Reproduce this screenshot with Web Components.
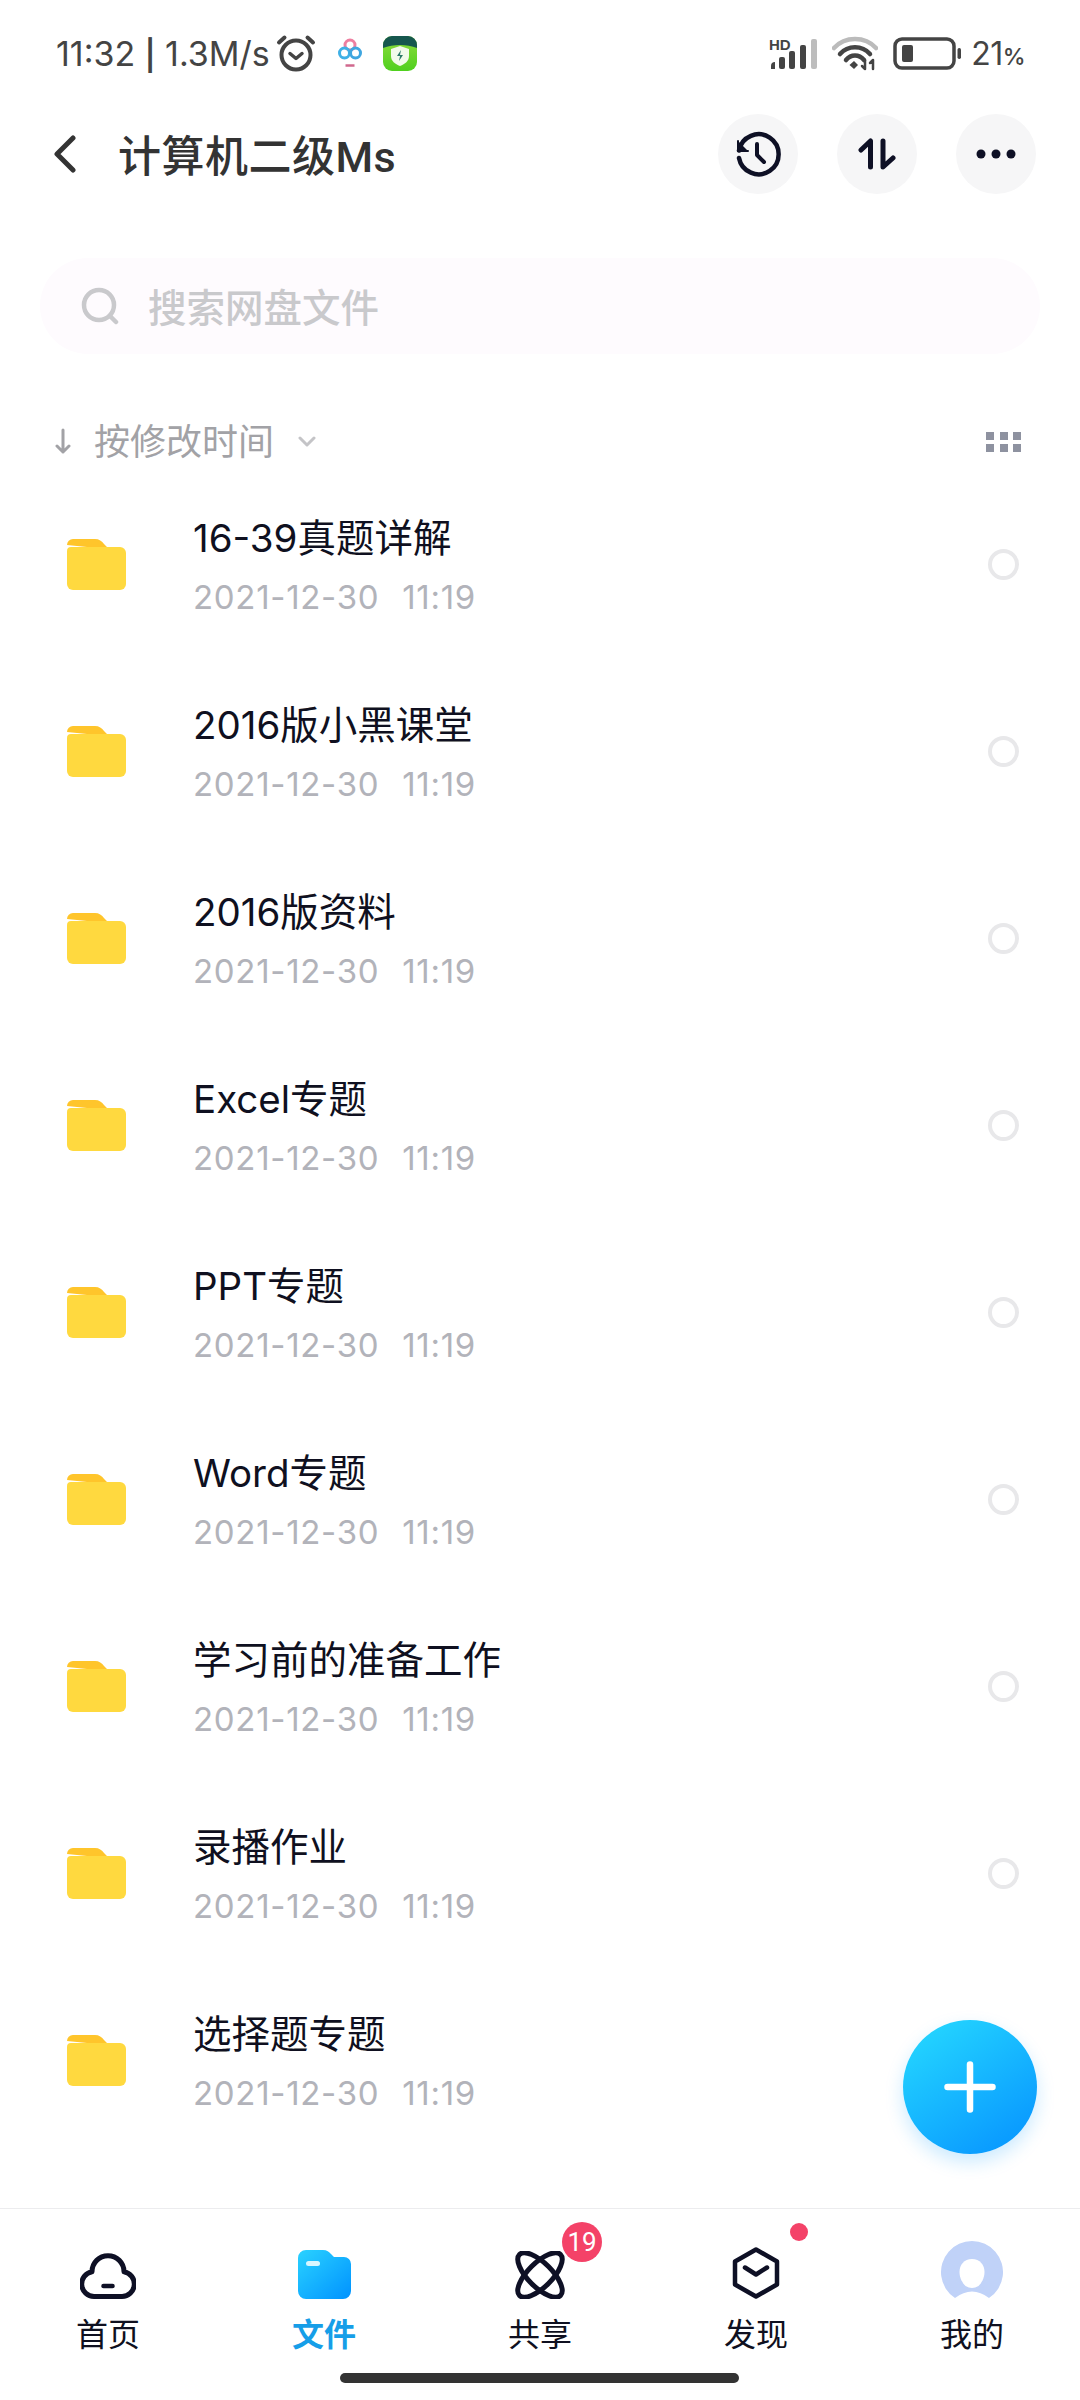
<!DOCTYPE html>
<html lang="zh">
<head>
<meta charset="utf-8">
<title>计算机二级Ms</title>
<style>
    html, body { margin: 0; padding: 0; background: #fff; }
    body { font-family: Roboto, "Noto Sans CJK SC", sans-serif; }
</style>
</head>
<body>
<disk-page>
    <status-bar></status-bar>
    <app-header title="计算机二级Ms"></app-header>
    <search-box placeholder="搜索网盘文件"></search-box>
    <sort-bar label="按修改时间"></sort-bar>
    <file-list>
        <file-row name="16-39真题详解" time="2021-12-30  11:19"></file-row>
        <file-row name="2016版小黑课堂" time="2021-12-30  11:19"></file-row>
        <file-row name="2016版资料" time="2021-12-30  11:19"></file-row>
        <file-row name="Excel专题" time="2021-12-30  11:19"></file-row>
        <file-row name="PPT专题" time="2021-12-30  11:19"></file-row>
        <file-row name="Word专题" time="2021-12-30  11:19"></file-row>
        <file-row name="学习前的准备工作" time="2021-12-30  11:19"></file-row>
        <file-row name="录播作业" time="2021-12-30  11:19"></file-row>
        <file-row name="选择题专题" time="2021-12-30  11:19" noradio></file-row>
    </file-list>
    <fab-button></fab-button>
    <tab-bar>
        <tab-item label="首页" icon="home"></tab-item>
        <tab-item label="文件" icon="files" active></tab-item>
        <tab-item label="共享" icon="share" badge="19"></tab-item>
        <tab-item label="发现" icon="discover" dot></tab-item>
        <tab-item label="我的" icon="me"></tab-item>
    </tab-bar>
</disk-page>

<script>
const FONT = 'Roboto, "Noto Sans CJK SC", sans-serif';
const LIST_FONT = 'Inter, "Noto Sans CJK SC", sans-serif';

class DiskPage extends HTMLElement {
    constructor() {
        super();
        this.attachShadow({ mode: 'open' });
    }

    connectedCallback() {
        this.shadowRoot.innerHTML = `
            <style>
                :host {
                    display: flex;
                    flex-direction: column;
                    position: relative;
                    width: 1080px;
                    height: 2400px;
                    overflow: hidden;
                    background: #fff;
                    font-family: ${FONT};
                }
            </style>
            <slot></slot>
        `;
    }
}

class StatusBar extends HTMLElement {
    constructor() {
        super();
        this.attachShadow({ mode: 'open' });
    }

    connectedCallback() {
        this.shadowRoot.innerHTML = `
            <style>
                :host {
                    display: flex;
                    align-items: center;
                    justify-content: space-between;
                    height: 106px;
                    padding: 0 55px 0 56px;
                    box-sizing: border-box;
                    color: #444;
                    font-family: Inter, Roboto, sans-serif;
                }
                .side { display: flex; align-items: center; }
                .clock { font-size: 34px; white-space: pre; }
                .clock b { font-size: 30px; font-weight: 600; }
                .alarm { margin-left: 6px; }
                .rings { margin-left: 22px; }
                .app { margin-left: 21px; }
                .hd { margin-right: 13px; }
                .wifi { margin-right: 15px; }
                .pct { font-size: 32px; margin-left: 10px; letter-spacing: -0.5px; }
                .pct small { font-size: 23px; font-weight: 500; }
                svg { display: block; }
            </style>
            <div class="side">
                <span class="clock">11:32 <b>|</b> 1.3M/s</span>
                <svg class="alarm" width="40" height="38" viewBox="0 0 40 38" fill="none" stroke="#444" stroke-linecap="round" stroke-linejoin="round">
                    <circle cx="20" cy="21" r="14.500" stroke-width="4"/>
                    <path d="M3 8.500 8.500 3.500M37 8.500 31.500 3.500" stroke-width="4"/>
                    <path d="M14 19.500l6 5 6-5" stroke-width="3.500"/>
                </svg>
                <svg class="rings" width="24" height="30" viewBox="0 0 24 30" fill="none">
                    <circle cx="12" cy="7" r="5" stroke="#ee7fa0" stroke-width="3"/>
                    <circle cx="6.500" cy="15" r="5" stroke="#3fb0e6" stroke-width="3"/>
                    <circle cx="17.500" cy="15" r="5" stroke="#3fa6e0" stroke-width="3"/>
                    <path d="M7.500 27.500h9" stroke="#d0688e" stroke-width="2.500"/>
                </svg>
                <svg class="app" width="34" height="35" viewBox="0 0 34 35">
                    <defs>
                        <linearGradient id="g" x1="0" y1="0" x2="0" y2="1">
                            <stop offset="0" stop-color="#8fdc3d"/>
                            <stop offset="1" stop-color="#4fd01e"/>
                        </linearGradient>
                    </defs>
                    <rect width="34" height="35" rx="9" fill="url(#g)"/>
                    <path d="M0 12V9a9 9 0 0 1 9-9h16a9 9 0 0 1 9 9v3C24 8 10 8 0 12Z" fill="#16574e"/>
                    <path d="M17 10l9 3v7c0 5-4 8-9 10-5-2-9-5-9-10v-7Z" fill="#f2fbea"/>
                    <path d="M18 14l-4 6h3l-1 5 4-6h-3Z" fill="#2c7a68"/>
                </svg>
            </div>
            <div class="side">
                <svg class="hd" width="50" height="39" viewBox="0 -3 50 39">
                    <text x="0" y="13" font-family="Liberation Sans, sans-serif" font-size="15" font-weight="700" fill="#444">HD</text>
                    <g fill="#444">
                        <path d="M2 32v-3a4 4 0 0 1 4-4v7Z"/>
                        <rect x="10" y="20" width="6" height="12" rx="2"/>
                        <rect x="20" y="14" width="6" height="18" rx="2"/>
                        <rect x="31" y="8" width="6" height="24" rx="2"/>
                    </g>
                    <rect x="42" y="2" width="6" height="30" rx="2" fill="#bdbdbd"/>
                </svg>
                <svg class="wifi" width="46" height="36" viewBox="0 0 46 36" fill="none" stroke-linecap="round">
                    <path d="M2 13C13 1 33 1 44 13" stroke="#bbb" stroke-width="4.500"/>
                    <path d="M8 19C16 10 30 10 38 19" stroke="#444" stroke-width="4.500"/>
                    <path d="M14 25C19 19 27 19 32 25" stroke="#444" stroke-width="4.500"/>
                    <path d="M17.500 30 22 26l4 4-4 4Z" fill="#444" stroke="none"/>
                    <path d="M33 25v9M30 31l3 3M41 34v-9M38 28l3-3" stroke="#444" stroke-width="2.500"/>
                </svg>
                <svg width="68" height="33" viewBox="0 0 68 33" fill="none">
                    <rect x="2" y="2" width="59" height="29" rx="7" stroke="#444" stroke-width="3.500"/>
                    <rect x="9" y="8" width="11" height="17" rx="2" fill="#444"/>
                    <rect x="64.500" y="11" width="3.500" height="11" rx="1.700" fill="#444"/>
                </svg>
                <span class="pct">21<small>%</small></span>
            </div>
        `;
    }
}

class RoundButton extends HTMLElement {
    constructor() {
        super();
        this.attachShadow({ mode: 'open' });
    }

    connectedCallback() {
        this.shadowRoot.innerHTML = `
            <style>
                :host {
                    display: flex;
                    align-items: center;
                    justify-content: center;
                    width: 80px;
                    height: 80px;
                    border-radius: 50%;
                    background: #f6f6f7;
                }
            </style>
            <slot></slot>
        `;
    }
}

class AppHeader extends HTMLElement {
    constructor() {
        super();
        this.attachShadow({ mode: 'open' });
    }

    connectedCallback() {
        this.shadowRoot.innerHTML = `
            <style>
                :host {
                    display: flex;
                    align-items: center;
                    height: 96px;
                    padding: 0 44px 0 54px;
                    box-sizing: border-box;
                }
                h1 {
                    flex: 1;
                    margin: 0 0 3px 42px;
                    font-size: 43px;
                    font-weight: 500;
                    letter-spacing: 0.5px;
                    color: #333;
                    font-family: ${FONT};
                }
                .actions { display: flex; gap: 39px; }
                svg { display: block; }
            </style>
            <svg width="22" height="38" viewBox="0 0 22 38" fill="none" stroke="#333" stroke-width="5" stroke-linecap="round" stroke-linejoin="round">
                <path d="M19 3 3 19l16 16"/>
            </svg>
            <h1>${this.getAttribute('title')}</h1>
            <div class="actions">
                <round-button>
                    <svg width="46" height="46" viewBox="0 0 46 46" fill="none" stroke="#0e1025" stroke-width="4.500" stroke-linecap="round" stroke-linejoin="round">
                        <path d="M4 19.500A20 20 0 1 1 4 27"/>
                        <path d="M3 10v10h10" fill="#0e1025" stroke-width="2"/>
                        <path d="M22 13v11l7 7" stroke-width="4"/>
                    </svg>
                </round-button>
                <round-button>
                    <svg width="38" height="32" viewBox="0 0 38 32" fill="none" stroke="#0e1025" stroke-width="5" stroke-linecap="round" stroke-linejoin="round">
                        <path d="M3 12 12.500 3v26"/>
                        <path d="M25 3v26l10-9"/>
                    </svg>
                </round-button>
                <round-button>
                    <svg width="40" height="10" viewBox="0 0 40 10" fill="#0e1025">
                        <circle cx="5" cy="5" r="4.500"/>
                        <circle cx="20" cy="5" r="4.500"/>
                        <circle cx="35" cy="5" r="4.500"/>
                    </svg>
                </round-button>
            </div>
        `;
    }
}

class SearchBox extends HTMLElement {
    constructor() {
        super();
        this.attachShadow({ mode: 'open' });
    }

    connectedCallback() {
        this.shadowRoot.innerHTML = `
            <style>
                :host {
                    display: flex;
                    align-items: center;
                    gap: 28px;
                    height: 96px;
                    margin: 56px 40px 0;
                    padding: 0 0 0 41px;
                    box-sizing: border-box;
                    border-radius: 48px;
                    background: #fefbfe;
                    color: #c9c9cc;
                    font-size: 38.500px;
                    font-weight: 500;
                }
                span { margin-bottom: 3px; }
                svg { display: block; }
            </style>
            <svg width="39" height="38" viewBox="0 0 39 38" fill="none" stroke="#c9c9cc" stroke-width="4.500" stroke-linecap="round">
                <circle cx="18" cy="18" r="15"/>
                <path d="M30 30l5 5"/>
            </svg>
            <span>${this.getAttribute('placeholder')}</span>
        `;
    }
}

class SortBar extends HTMLElement {
    constructor() {
        super();
        this.attachShadow({ mode: 'open' });
    }

    connectedCallback() {
        this.shadowRoot.innerHTML = `
            <style>
                :host {
                    display: flex;
                    align-items: center;
                    height: 60px;
                    margin-top: 57px;
                    padding: 0 59px 0 55px;
                    box-sizing: border-box;
                    color: #a2a2a6;
                    font-size: 36px;
                }
                .label { margin-left: 23px; margin-bottom: 4px; }
                .chev { margin-left: 24px; flex: 1; }
                .grid {
                    display: grid;
                    grid-template-columns: repeat(3, 8px);
                    gap: 4px 5.500px;
                    margin-top: 2px;
                }
                .grid i { width: 8px; height: 8px; background: #8e92a0; }
                svg { display: block; }
            </style>
            <svg width="16" height="26" viewBox="0 0 16 26" fill="none" stroke="#a2a2a6" stroke-width="3" stroke-linecap="round" stroke-linejoin="round">
                <path d="M8 2v22M2 18l6 6 6-6"/>
            </svg>
            <span class="label">${this.getAttribute('label')}</span>
            <div class="chev">
                <svg width="18" height="11" viewBox="0 0 18 11" fill="none" stroke="#c4c4c7" stroke-width="3" stroke-linecap="round" stroke-linejoin="round">
                    <path d="M2 2l7 7 7-7"/>
                </svg>
            </div>
            <div class="grid"><i></i><i></i><i></i><i></i><i></i><i></i></div>
        `;
    }
}

class FileList extends HTMLElement {
    constructor() {
        super();
        this.attachShadow({ mode: 'open' });
    }

    connectedCallback() {
        this.shadowRoot.innerHTML = `
            <style>
                :host { display: block; flex: 1; min-height: 0; }
            </style>
            <slot></slot>
        `;
    }
}

class FileRow extends HTMLElement {
    constructor() {
        super();
        this.attachShadow({ mode: 'open' });
    }

    connectedCallback() {
        const radio = this.hasAttribute('noradio') ? '' : '<span class="radio"></span>';
        this.shadowRoot.innerHTML = `
            <style>
                :host {
                    display: flex;
                    align-items: center;
                    height: 187px;
                    padding: 0 61px 0 67px;
                    box-sizing: border-box;
                    font-family: ${LIST_FONT};
                }
                svg { display: block; flex: none; }
                .text { flex: 1; margin-left: 67px; min-width: 0; }
                .name { font-size: 38.500px; line-height: 50px; color: #0f1020; }
                .time {
                    margin-top: 14px;
                    font-size: 33px;
                    line-height: 40px;
                    color: #b2b3ba;
                    white-space: pre;
                    letter-spacing: 0.7px;
                    word-spacing: 1.5px;
                }
                .radio {
                    width: 31px;
                    height: 31px;
                    box-sizing: border-box;
                    border: 4.500px solid #e8e8ea;
                    border-radius: 50%;
                }
            </style>
            <svg width="59" height="51" viewBox="0 0 59 51">
                <path d="M0 6a6 6 0 0 1 6-6h22c4 0 7 2 9 5l3 3H20Z" fill="#ffc52b"/>
                <path d="M0 12q0-4 4-4h49a6 6 0 0 1 6 6v31a6 6 0 0 1-6 6H6a6 6 0 0 1-6-6Z" fill="#ffd93f"/>
            </svg>
            <div class="text">
                <div class="name">${this.getAttribute('name')}</div>
                <div class="time">${this.getAttribute('time')}</div>
            </div>
            ${radio}
        `;
    }
}

class FabButton extends HTMLElement {
    constructor() {
        super();
        this.attachShadow({ mode: 'open' });
    }

    connectedCallback() {
        this.shadowRoot.innerHTML = `
            <style>
                :host {
                    position: absolute;
                    left: 903px;
                    top: 2020px;
                    display: flex;
                    align-items: center;
                    justify-content: center;
                    width: 134px;
                    height: 134px;
                    border-radius: 50%;
                    background: linear-gradient(145deg, #25d8ff 5%, #0c9fff 80%, #0094ff);
                    box-shadow: 0 8px 18px rgba(20, 160, 255, 0.22);
                }
                svg { display: block; }
            </style>
            <svg width="52" height="52" viewBox="0 0 52 52" stroke="#fff" stroke-width="6.500" stroke-linecap="round">
                <path d="M26 3.500v45M3.500 26h45"/>
            </svg>
        `;
    }
}

class TabBar extends HTMLElement {
    constructor() {
        super();
        this.attachShadow({ mode: 'open' });
    }

    connectedCallback() {
        this.shadowRoot.innerHTML = `
            <style>
                :host {
                    display: block;
                    position: relative;
                    height: 192px;
                    box-sizing: border-box;
                    border-top: 1px solid #ececee;
                }
                .tabs {
                    display: grid;
                    grid-template-columns: repeat(5, 1fr);
                    padding-top: 32px;
                }
                .home-bar {
                    position: absolute;
                    left: 340px;
                    top: 164px;
                    width: 399px;
                    height: 10px;
                    border-radius: 5px;
                    background: #333;
                }
            </style>
            <div class="tabs"><slot></slot></div>
            <div class="home-bar"></div>
        `;
    }
}

const TAB_ICONS = {
    home: `<svg width="56" height="48" viewBox="0 0 56 48" fill="none" stroke="#0e1025" stroke-width="5" stroke-linecap="round" stroke-linejoin="round">
            <path d="M14 45.500H42A12.500 12.500 0 0 0 44 20.700 A16 16 0 0 0 12 20.700 A12.500 12.500 0 0 0 14 45.500Z"/>
            <path d="M23.500 35h9" stroke-width="4.500"/>
        </svg>`,
    files: `<svg width="53" height="49" viewBox="0 0 53 49">
            <defs>
                <linearGradient id="f" x1="0" y1="0" x2="1" y2="1">
                    <stop offset="0" stop-color="#2ad2ff"/>
                    <stop offset="1" stop-color="#0092ff"/>
                </linearGradient>
            </defs>
            <path d="M0 8a8 8 0 0 1 8-8h17c4 0 6 2 8 4l3 3h10a7 7 0 0 1 7 7v27a8 8 0 0 1-8 8H8a8 8 0 0 1-8-8Z" fill="url(#f)"/>
            <rect x="8" y="11" width="14" height="5" rx="2.500" fill="#d8f6ff"/>
        </svg>`,
    share: `<svg width="50" height="48" viewBox="0 0 50 48" fill="none" stroke="#0e1025" stroke-width="5">
            <ellipse cx="25" cy="24" rx="29" ry="12" transform="rotate(45 25 24)"/>
            <ellipse cx="25" cy="24" rx="29" ry="12" transform="rotate(-45 25 24)"/>
        </svg>`,
    discover: `<svg width="48" height="52" viewBox="0 0 48 52" fill="none" stroke="#0e1025" stroke-width="4.500" stroke-linecap="round" stroke-linejoin="round">
            <path d="M24 2.500 45 14.500v23L24 49.500 3 37.500v-23Z"/>
            <path d="M13 20.500l11 7 11-7"/>
        </svg>`,
    me: `<svg width="62" height="58" viewBox="0 0 62 58">
            <path d="M14 57A31 31 0 1 1 48 57Q31 44 14 57Z" fill="#c0d2f8"/>
            <path d="M31 18c-8 0-12.500 6-12.500 13 0 6 3 11 6 14q6.500 4 13 0c3-3 6-8 6-14 0-7-4.500-13-12.500-13Z" fill="#fff"/>
        </svg>`
};

class TabItem extends HTMLElement {
    constructor() {
        super();
        this.attachShadow({ mode: 'open' });
    }

    connectedCallback() {
        const active = this.hasAttribute('active');
        const badge = this.getAttribute('badge');
        this.shadowRoot.innerHTML = `
            <style>
                :host {
                    display: flex;
                    flex-direction: column;
                    align-items: center;
                    font-size: 32px;
                    color: ${active ? '#169ee8' : '#0f1020'};
                    font-weight: ${active ? 700 : 400};
                }
                .icon {
                    position: relative;
                    display: flex;
                    align-items: flex-end;
                    justify-content: center;
                    height: 58px;
                }
                .badge {
                    position: absolute;
                    left: 47px;
                    top: -19px;
                    width: 40px;
                    height: 40px;
                    border-radius: 50%;
                    background: #f44268;
                    color: #fff;
                    font-size: 26px;
                    font-weight: 400;
                    line-height: 40px;
                    text-align: center;
                }
                .dot {
                    position: absolute;
                    left: 58px;
                    top: -18px;
                    width: 18px;
                    height: 18px;
                    border-radius: 50%;
                    background: #f44268;
                }
                .label { margin-top: 16px; line-height: 40px; }
                svg { display: block; }
            </style>
            <div class="icon">
                ${TAB_ICONS[this.getAttribute('icon')]}
                ${badge ? `<span class="badge">${badge}</span>` : ''}
                ${this.hasAttribute('dot') ? '<span class="dot"></span>' : ''}
            </div>
            <span class="label">${this.getAttribute('label')}</span>
        `;
    }
}

customElements.define('disk-page', DiskPage);
customElements.define('status-bar', StatusBar);
customElements.define('round-button', RoundButton);
customElements.define('app-header', AppHeader);
customElements.define('search-box', SearchBox);
customElements.define('sort-bar', SortBar);
customElements.define('file-list', FileList);
customElements.define('file-row', FileRow);
customElements.define('fab-button', FabButton);
customElements.define('tab-bar', TabBar);
customElements.define('tab-item', TabItem);
</script>
</body>
</html>
